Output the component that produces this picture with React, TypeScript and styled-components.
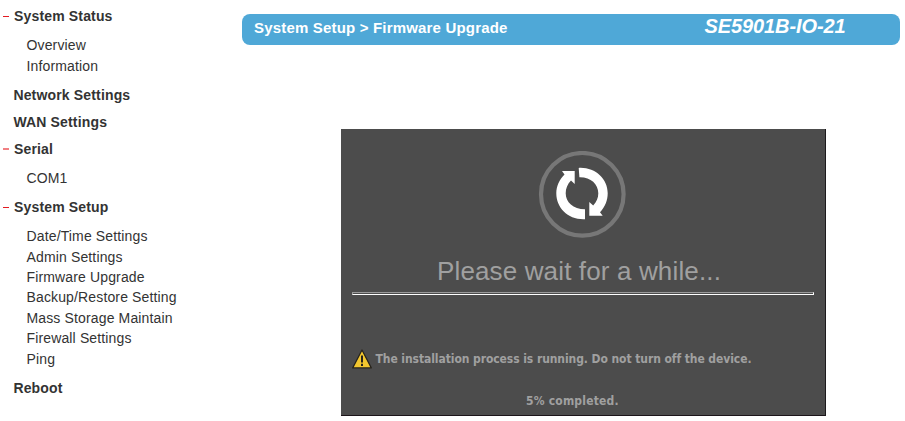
import React from "react";
import styled, { createGlobalStyle } from "styled-components";

const GlobalStyle = createGlobalStyle`
  body {
    margin: 0;
    background: #fff;
    font-family: "Liberation Sans", Arial, sans-serif;
    color: #333;
    overflow: hidden;
  }
`;

const Page = styled.div`
  display: flex;
  height: 421px;
`;

const Sidebar = styled.nav`
  width: 242px;
  flex: none;
  padding-top: 2.75px;
  box-sizing: border-box;
`;

const Heading = styled.div<{ $open?: boolean }>`
  display: flex;
  align-items: center;
  height: 27px;
  padding-left: ${(p) => (p.$open ? 3 : 13.4)}px;
  font-size: 14px;
  font-weight: bold;
  letter-spacing: 0.16px;
  white-space: nowrap;
`;

const Dash = styled.span<{ $soft?: boolean }>`
  width: 6px;
  height: ${(p) => (p.$soft ? 2 : 1)}px;
  margin-right: 5px;
  background: ${(p) => (p.$soft ? "#f17f82" : "#e31b22")};
`;

const SubList = styled.ul`
  list-style: none;
  margin: 5.45px 0;
  padding: 0 0 0 26.5px;
`;

const SubItem = styled.li`
  height: 20.43px;
  line-height: 20.43px;
  font-size: 14px;
  letter-spacing: 0.14px;
  white-space: nowrap;
`;

const Main = styled.main`
  width: 658px;
  flex: none;
`;

const TitleBar = styled.header`
  display: flex;
  justify-content: space-between;
  height: 31px;
  margin-top: 14px;
  padding: 0 54.5px 0 12px;
  box-sizing: border-box;
  border-radius: 8px;
  background: #4fa8d7;
  color: #fff;
  font-weight: bold;
  white-space: nowrap;
`;

const Crumb = styled.span`
  font-size: 15px;
  line-height: 28px;
  letter-spacing: 0.18px;
`;

const Model = styled.span`
  font-size: 20px;
  font-style: italic;
  line-height: 25px;
  letter-spacing: -0.1px;
`;

const Dialog = styled.section`
  display: flex;
  flex-direction: column;
  width: 485px;
  height: 287px;
  margin: 84px 0 0 99px;
  padding: 22px 11px 0;
  box-sizing: border-box;
  background: #4c4c4c;
  border-right: 1px solid #1c1a1c;
  border-bottom: 1px solid #1c151a;
  color: #a0a0a0;
`;

const Spinner = styled.svg`
  display: block;
  width: 88px;
  height: 88px;
  margin-left: 186px;
`;

const WaitText = styled.div`
  margin-top: 16px;
  height: 32px;
  line-height: 32px;
  padding-left: 85px;
  font-size: 26px;
  letter-spacing: 0.14px;
  white-space: nowrap;
`;

const Rule = styled.hr`
  width: 462px;
  height: 3px;
  box-sizing: border-box;
  margin: 5px 0 0;
  border: 1px solid;
  border-color: #9a9a9a #fff #fff #9a9a9a;
`;

const Notice = styled.div`
  display: flex;
  align-items: center;
  height: 20px;
  margin-top: 54px;
  font: bold 12px/20px "DejaVu Sans Condensed", "DejaVu Sans", Tahoma, sans-serif;
  letter-spacing: -0.075px;
  white-space: nowrap;
`;

const WarnIcon = styled.svg`
  width: 20px;
  height: 20px;
  margin-right: 3.5px;
`;

const Progress = styled(Notice)`
  margin-top: 22px;
  padding-left: 174px;
  letter-spacing: 0.2px;
`;

const menu: { title: string; soft?: boolean; items?: string[] }[] = [
  { title: "System Status", items: ["Overview", "Information"] },
  { title: "Network Settings" },
  { title: "WAN Settings" },
  { title: "Serial", soft: true, items: ["COM1"] },
  {
    title: "System Setup",
    items: [
      "Date/Time Settings",
      "Admin Settings",
      "Firmware Upgrade",
      "Backup/Restore Setting",
      "Mass Storage Maintain",
      "Firewall Settings",
      "Ping",
    ],
  },
  { title: "Reboot" },
];

export default function App() {
  return (
    <Page>
      <GlobalStyle />
      <Sidebar>
        {menu.map((group) => (
          <React.Fragment key={group.title}>
            <Heading $open={!!group.items}>
              {group.items && <Dash $soft={group.soft} />}
              {group.title}
            </Heading>
            {group.items && (
              <SubList>
                {group.items.map((item) => (
                  <SubItem key={item}>{item}</SubItem>
                ))}
              </SubList>
            )}
          </React.Fragment>
        ))}
      </Sidebar>
      <Main>
        <TitleBar>
          <Crumb>System Setup &gt; Firmware Upgrade</Crumb>
          <Model>SE5901B-IO-21</Model>
        </TitleBar>
        <Dialog>
          <Spinner viewBox="0 0 88 88">
            <circle cx="44.3" cy="43.3" r="41.3" fill="none" stroke="#777" strokeWidth="4.2" />
            <g fill="#fff">
              <path d="M24 20H36.700V33L33 29.500C29.500 33 27.700 37.500 27.700 42.300C27.700 51 35 58.300 47 58.300V68.200C30 69 18.300 57 18.300 42.300C18.300 35 21.500 28.500 26.500 23.500Z" />
              <path d="M40.700 16.900C57 16 69.700 27.500 69.700 42.300C69.700 49.500 67 56 62 61.300L64.700 64.700H51.300V51L55.200 54.500C58.500 51 60.300 47 60.300 42.300C60.300 33 52.500 26 41.400 26.300Z" />
            </g>
          </Spinner>
          <WaitText>Please wait for a while...</WaitText>
          <Rule />
          <Notice>
            <WarnIcon viewBox="0 0 20 20">
              <path d="M10 1 19.300 18.900H0.700Z" fill="#f3c72f" stroke="#26231c" strokeWidth="1.200" strokeLinejoin="round" />
              <path d="M10 6.500V13.500M10 14.800V17" stroke="#26231c" strokeWidth="2" />
            </WarnIcon>
            The installation process is running. Do not turn off the device.
          </Notice>
          <Progress>5% completed.</Progress>
        </Dialog>
      </Main>
    </Page>
  );
}
